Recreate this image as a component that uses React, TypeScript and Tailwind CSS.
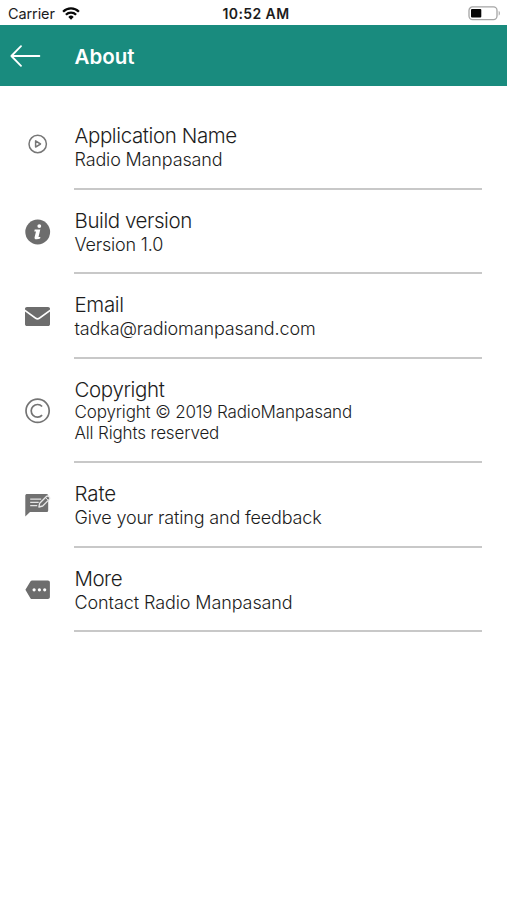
import type { ReactNode } from "react";

type RowProps = {
  icon: ReactNode;
  title: string;
  titleClass: string;
  lines: string[];
  lineClass: string;
  className: string;
  bodyClass: string;
};

const PlayIcon = () => (
  <svg className="mb-[6px]" width="26" height="26" viewBox="0 0 26 26" fill="none" stroke="#777" strokeLinejoin="round">
    <circle cx="12.700" cy="13" r="8.700" strokeWidth="1.500" />
    <path d="M10.600 9.900v6.200l4.900-3.100z" strokeWidth="1.500" />
  </svg>
);

const InfoIcon = () => (
  <svg width="26" height="26" viewBox="0 0 26 26">
    <circle cx="12.700" cy="13" r="12.400" fill="#6d6d6d" />
    <circle cx="14.300" cy="7.100" r="1.900" fill="#fff" />
    <path d="M9.700 10.400h5.600l-1.800 7.500h1.900l-.3 1.600c-1.200.6-2.700.9-3.900.8-1.300-.1-1.900-.8-1.600-2.100l1.400-5.700H9.300z" fill="#fff" />
  </svg>
);

const MailIcon = () => (
  <svg width="26" height="26" viewBox="0.500 0.500 26 26" fill="#6d6d6d">
    <path d="M2.400 3.400h21.200c1 0 1.900.8 1.900 1.800v.8L14.400 14c-.8.6-2 .6-2.800 0L.5 6v-.8c0-1 .9-1.800 1.900-1.800z" />
    <path d="M.5 8l10.300 7.500c1.300.9 3.100.9 4.400 0L25.500 8v12.700c0 1-.9 1.800-1.900 1.800H2.400c-1 0-1.900-.8-1.900-1.800z" />
  </svg>
);

const CopyrightIcon = () => (
  <svg width="26" height="26" viewBox="0.400 0.200 26 26" fill="none" stroke="#747474" strokeWidth="1.700">
    <circle cx="13" cy="13" r="11.600" />
    <path d="M17.500 8.700a6.300 6.300 0 1 0 0 8.600" />
  </svg>
);

const RateIcon = () => (
  <svg className="mb-[2px]" width="26" height="26" viewBox="0.300 0 26 26">
    <path d="M2.300 1.900h19.700a1.500 1.500 0 0 1 1.500 1.500v15.200a1.500 1.500 0 0 1-1.500 1.500H5.300L.6 24.600V3.600c0-1 .8-1.700 1.700-1.700z" fill="#717171" />
    <path d="M5.500 7.200h11M5.500 10.400h8.500M5.500 13.600h7" stroke="#e4e4e4" strokeWidth="1.200" />
    <path d="M14.200 15l.8-3.800 6.700-6.700c.7-.7 1.600-.7 2.300 0l.6.600c.7.7.7 1.600 0 2.300l-6.600 6.600z" fill="#717171" stroke="#e8e8e8" strokeWidth="1.300" strokeLinejoin="round" />
    <path d="M20.700 5.500l2.900 2.900" stroke="#e8e8e8" strokeWidth="1" />
  </svg>
);

const MoreIcon = () => (
  <svg width="26" height="26" viewBox="0.400 0.200 26 26">
    <path d="M7.500 3.700h15.800c1.200 0 2 .8 2 2v14.600c0 1.200-.8 2-2 2H7.500c-.8 0-1.300-.3-1.700-.9L.8 13l5-8.400c.4-.6.900-.9 1.700-.9z" fill="#6d6d6d" />
    <g fill="#fff">
      <circle cx="9.500" cy="13" r="1.600" />
      <circle cx="14.800" cy="13" r="1.600" />
      <circle cx="20.100" cy="13" r="1.600" />
    </g>
  </svg>
);

const Row = ({ icon, title, titleClass, lines, lineClass, className, bodyClass }: RowProps) => (
  <li className={`flex ${className}`}>
    <div className="flex w-[74px] shrink-0 items-center pl-[25px]">{icon}</div>
    <div className={`mr-[25px] flex-1 border-b-2 border-[#c8c8c8] pl-[0.5px] ${bodyClass}`}>
      <h2 className={`w-max text-[20.5px] leading-[25px] font-light whitespace-nowrap ${titleClass}`}>{title}</h2>
      {lines.map((line) => (
        <p key={line} className={`w-max font-light whitespace-nowrap ${lineClass}`}>
          {line}
        </p>
      ))}
    </div>
  </li>
);

export default function App() {
  return (
    <div className="flex h-[900px] w-full flex-col bg-white font-['Inter','Liberation_Sans',sans-serif] text-[#1c1c1c]">
      <div className="grid h-[25px] shrink-0 grid-cols-3 items-center pt-[2px] pr-[6px] pl-[8px]">
        <div className="flex items-center gap-[7px]">
          <span className="text-[14.5px] leading-[20px] tracking-[-0.1px]">Carrier</span>
          <svg width="18" height="13" viewBox="0 0 18 13" fill="none" stroke="#080808" strokeWidth="2.300">
            <path d="M1.100 4.700a11.200 11.200 0 0 1 15.800 0" />
            <path d="M3.900 7.700a7.200 7.200 0 0 1 10.200 0" />
            <path d="M9 12.700L6.300 9.900a3.900 3.900 0 0 1 5.400 0z" fill="#080808" stroke="none" />
          </svg>
        </div>
        <span className="pl-[3px] text-center text-[14px] leading-[20px] font-semibold tracking-[0.4px] whitespace-nowrap">10:52 AM</span>
        <svg className="justify-self-end" width="33" height="15" viewBox="0 0 33 15">
          <rect x="1" y=".9" width="28" height="12.700" rx="3.500" fill="#fff" stroke="#a5a5a5" strokeWidth="1.300" />
          <rect x="3" y="2.900" width="10.300" height="8.700" rx="1" fill="#050505" />
          <path d="M30.700 5v4.600c1.600-.5 1.600-4.100 0-4.600z" fill="#a5a5a5" />
        </svg>
      </div>

      <header className="flex h-[61px] shrink-0 items-center bg-[#198b7e] text-white">
        <div className="w-[74.5px] shrink-0 pl-[10px]">
          <svg width="31" height="22" viewBox="0 0 31 22" fill="none" stroke="currentColor" strokeWidth="1.800" strokeLinecap="round" strokeLinejoin="round">
            <path d="M11 1.200L1.400 11l9.600 9.800M1.400 11h28" />
          </svg>
        </div>
        <h1 className="pt-[2px] text-[20.5px] leading-[26px] font-semibold">About</h1>
      </header>

      <ul className="pt-[18px]">
        <Row className="h-[86px]" bodyClass="pt-[19px]" icon={<PlayIcon />} title="Application Name" titleClass="tracking-[-0.38px]" lines={["Radio Manpasand"]} lineClass="text-[18px] leading-[23px] tracking-[-0.15px]" />
        <Row className="h-[84px]" bodyClass="pt-[18px]" icon={<InfoIcon />} title="Build version" titleClass="tracking-[-0.43px]" lines={["Version 1.0"]} lineClass="text-[18px] leading-[23px] tracking-[-0.2px]" />
        <Row className="h-[85px]" bodyClass="pt-[18px]" icon={<MailIcon />} title="Email" titleClass="tracking-[-0.35px]" lines={["tadka@radiomanpasand.com"]} lineClass="text-[18px] leading-[23px] tracking-[-0.14px]" />
        <Row className="h-[104px]" bodyClass="pt-[18px]" icon={<CopyrightIcon />} title="Copyright" titleClass="tracking-[-0.38px]" lines={["Copyright © 2019 RadioManpasand", "All Rights reserved"]} lineClass="text-[17px] leading-[20.5px] tracking-[-0.15px]" />
        <Row className="h-[85px]" bodyClass="pt-[18px]" icon={<RateIcon />} title="Rate" titleClass="tracking-[-0.1px]" lines={["Give your rating and feedback"]} lineClass="text-[18px] leading-[23px] tracking-[-0.17px]" />
        <Row className="h-[84px]" bodyClass="pt-[18px]" icon={<MoreIcon />} title="More" titleClass="tracking-[-0.5px]" lines={["Contact Radio Manpasand"]} lineClass="text-[18px] leading-[23px] tracking-[-0.1px]" />
      </ul>
    </div>
  );
}
